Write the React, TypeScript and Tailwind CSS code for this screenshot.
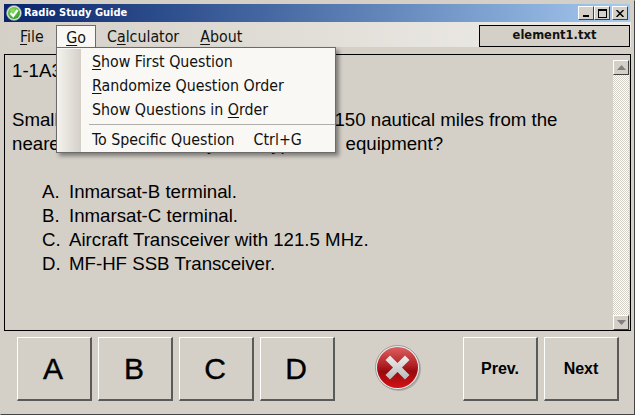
import React from "react";

const U = ({ children }: { children: React.ReactNode }) => <span className="underline underline-offset-2 decoration-1">{children}</span>;

function Btn({ label, className = "" }: { label: string; className?: string }) {
  return (
    <button className={`w-[75px] h-[64px] bg-[#d4d0c8] border-t border-l border-t-white border-l-white border-r-2 border-b-2 border-r-[#5a5a58] border-b-[#5a5a58] flex items-center justify-center text-black font-['Liberation_Sans',sans-serif] ${className}`}>
      {label}
    </button>
  );
}

function MenuItem({ children, right }: { children: React.ReactNode; right?: string }) {
  return (
    <div className="h-6 flex items-center pt-px pl-[35px] pr-3 text-[#111]">
      <span>{children}</span>
      {right && <span className="ml-[19px]">{right}</span>}
    </div>
  );
}

function Option({ letter, text }: { letter: string; text: string }) {
  return (
    <div className="pl-[30px] flex">
      <span className="w-[27px]">{letter}</span>
      <span>{text}</span>
    </div>
  );
}

export default function App() {
  return (
    <div className="relative w-[635px] h-[415px] overflow-hidden bg-[#d4d0c8] flex flex-col pt-1 px-1 pb-[3px] border-r border-b border-r-[#444] border-b-[#444] border-t border-l border-t-[#d4d0c8] border-l-[#d4d0c8] box-border">
      {/* Title bar */}
      <div className="h-[18px] -mt-px -ml-px flex items-center bg-gradient-to-r from-[#0a246a] to-[#a6caf0] shrink-0">
        <svg width="16" height="16" viewBox="0 0 16 16" className="ml-[2px] shrink-0">
          <defs>
            <radialGradient id="g" cx="0.4" cy="0.3" r="0.8">
              <stop offset="0" stopColor="#8fe060" />
              <stop offset="1" stopColor="#1f9a1f" />
            </radialGradient>
          </defs>
          <circle cx="8" cy="8" r="7.5" fill="#d8e4d8" stroke="#889" strokeWidth="0.6" />
          <circle cx="8" cy="8" r="6" fill="url(#g)" />
          <path d="M4.6 8 L7.2 11 L11.6 4.8" fill="none" stroke="#fff" strokeWidth="2.2" />
        </svg>
        <span className="ml-[2px] text-white font-bold text-[11px] font-['DejaVu_Sans_Condensed','DejaVu_Sans',sans-serif]">Radio Study Guide</span>
        <div className="ml-auto flex mr-[2px]">
          <div className="w-4 h-[14px] bg-[#d4d0c8] border-t border-l border-white border-r border-b border-r-[#404040] border-b-[#404040] flex items-end justify-center pb-[2px]">
            <div className="w-[6px] h-[2px] bg-black" />
          </div>
          <div className="w-4 h-[14px] bg-[#d4d0c8] border-t border-l border-white border-r border-b border-r-[#404040] border-b-[#404040] flex items-center justify-center">
            <div className="w-[9px] h-[9px] border border-black border-t-2" />
          </div>
          <div className="w-4 h-[14px] ml-[2px] bg-[#d4d0c8] border-t border-l border-white border-r border-b border-r-[#404040] border-b-[#404040] flex items-center justify-center">
            <svg width="8" height="7" viewBox="0 0 8 7"><path d="M0.5 0 L7.5 7 M7.5 0 L0.5 7" stroke="#000" strokeWidth="1.5" /></svg>
          </div>
        </div>
      </div>

      {/* Menu bar */}
      <div className="h-[25px] -ml-px -mr-px flex items-end bg-gradient-to-r from-[#d4d0c8] to-[#f0eeea] shrink-0 pt-[3px] font-['DejaVu_Sans_Condensed','DejaVu_Sans',sans-serif] text-[15.8px] text-[#111]">
        <div className="w-[52px] h-[22px] flex items-center pt-[2px] pl-[16px]"><span><U>F</U>ile</span></div>
        <div className="w-10 h-[22px] flex items-center justify-center pt-[2px] bg-[#f9f8f5] border-t border-l border-r border-[#6b6b6b]"><span><U>G</U>o</span></div>
        <div className="h-[22px] flex items-center pt-[2px] ml-[11px]"><span>C<U>a</U>lculator</span></div>
        <div className="h-[22px] flex items-center pt-[2px] ml-[21px]"><span><U>A</U>bout</span></div>
        <div className="ml-auto mr-px w-[151px] h-[22px] bg-[#d4d0c8] border border-black flex items-center justify-center font-bold text-[11.5px] font-['DejaVu_Sans',sans-serif]">element1.txt</div>
      </div>

      {/* Content panel */}
      <div className="mt-[7px] -ml-px -mr-px h-[277px] border border-black flex shrink-0 border-r-black">
        <div className="flex-1 pt-[4px] pl-[7px] font-['Liberation_Sans',sans-serif] text-[18.67px] leading-6 text-black">
          <div>1-1A3</div>
          <div className="h-6 mt-px" />
          <div>Small passenger vessels cruising over 150 nautical miles from the</div>
          <div>nearest coast must carry what types of <span className="ml-[9px]">equipment?</span></div>
          <div className="h-6" />
          <Option letter="A." text="Inmarsat-B terminal." />
          <Option letter="B." text="Inmarsat-C terminal." />
          <Option letter="C." text="Aircraft Transceiver with 121.5 MHz." />
          <Option letter="D." text="MF-HF SSB Transceiver." />
        </div>
        <div className="w-[16px] flex flex-col mr-px mt-[5px] bg-[repeating-conic-gradient(#d4d0c8_0_25%,#ffffff_0_50%)] bg-[length:2px_2px]">
          <div className="h-[15px] shrink-0 bg-[#d4d0c8] border-t border-l border-white border-r border-b border-r-[#404040] border-b-[#404040] flex items-center justify-center">
            <svg width="9" height="5"><path d="M4.5 0 L9 5 L0 5 Z" fill="#808080" /></svg>
          </div>
          <div className="flex-1" />
          <div className="h-[15px] shrink-0 bg-[#d4d0c8] border-t border-l border-white border-r border-b border-r-[#404040] border-b-[#404040] flex items-center justify-center">
            <svg width="9" height="5"><path d="M0 0 L9 0 L4.5 5 Z" fill="#808080" /></svg>
          </div>
        </div>
      </div>

      {/* Buttons */}
      <div className="mt-[6px] ml-[12px] flex items-start">
        <div className="flex gap-[6px]">
          <Btn label="A" className="pr-[2px] text-[30px] [-webkit-text-stroke:0.4px_black]" />
          <Btn label="B" className="pr-[2px] text-[30px] [-webkit-text-stroke:0.4px_black]" />
          <Btn label="C" className="pr-[2px] text-[30px] [-webkit-text-stroke:0.4px_black]" />
          <Btn label="D" className="pr-[2px] text-[30px] [-webkit-text-stroke:0.4px_black]" />
        </div>
        <div className="w-[128px] h-[64px] flex items-center justify-center pr-[2px] pb-[2px]">
          <svg width="48" height="48" viewBox="0 0 48 48">
            <defs>
              <linearGradient id="r" x1="0" y1="0" x2="0" y2="1">
                <stop offset="0" stopColor="#dc6060" />
                <stop offset="0.45" stopColor="#b02024" />
                <stop offset="0.6" stopColor="#980a0e" />
                <stop offset="1" stopColor="#d41216" />
              </linearGradient>
              <linearGradient id="x" x1="0" y1="0" x2="0" y2="1">
                <stop offset="0" stopColor="#f0ecec" />
                <stop offset="1" stopColor="#bababa" />
              </linearGradient>
            </defs>
            <circle cx="25" cy="25" r="22" fill="#000" opacity="0.18" />
            <circle cx="23.5" cy="23.5" r="22" fill="#f0ecec" stroke="#8a8a8a" strokeWidth="0.8" />
            <circle cx="23.5" cy="23.5" r="20.5" fill="url(#r)" />
            <path d="M11.5 16 L16 11.5 L23.5 19 L31 11.5 L35.5 16 L28 23.5 L35.5 31 L31 35.5 L23.5 28 L16 35.5 L11.5 31 L19 23.5 Z" fill="url(#x)" />
          </svg>
        </div>
        <div className="flex gap-[6px]">
          <Btn label="Prev." className="text-[16px] font-bold" />
          <Btn label="Next" className="text-[16px] font-bold" />
        </div>
      </div>

      {/* Dropdown */}
      <div className="absolute left-[55px] top-[46px] w-[280px] h-[106px] bg-[#f9f8f5] border border-[#6b6b6b] shadow-[3px_3px_4px_rgba(0,0,0,0.4)] font-['DejaVu_Sans_Condensed','DejaVu_Sans',sans-serif] text-[15.8px] pt-px">
        <div className="absolute left-0 top-px bottom-0 w-[24px] bg-gradient-to-r from-[#f5f3ef] to-[#d4d0c8]" />
        <div className="relative">
          <MenuItem><U>S</U>how First Question</MenuItem>
          <MenuItem><U>R</U>andomize Question Order</MenuItem>
          <MenuItem>Show Questions in <U>O</U>rder</MenuItem>
          <div className="h-[6px] flex items-center pl-8"><div className="h-px w-full bg-[#b0aea8]" /></div>
          <MenuItem right="Ctrl+G">To Specific Question</MenuItem>
        </div>
      </div>
    </div>
  );
}
